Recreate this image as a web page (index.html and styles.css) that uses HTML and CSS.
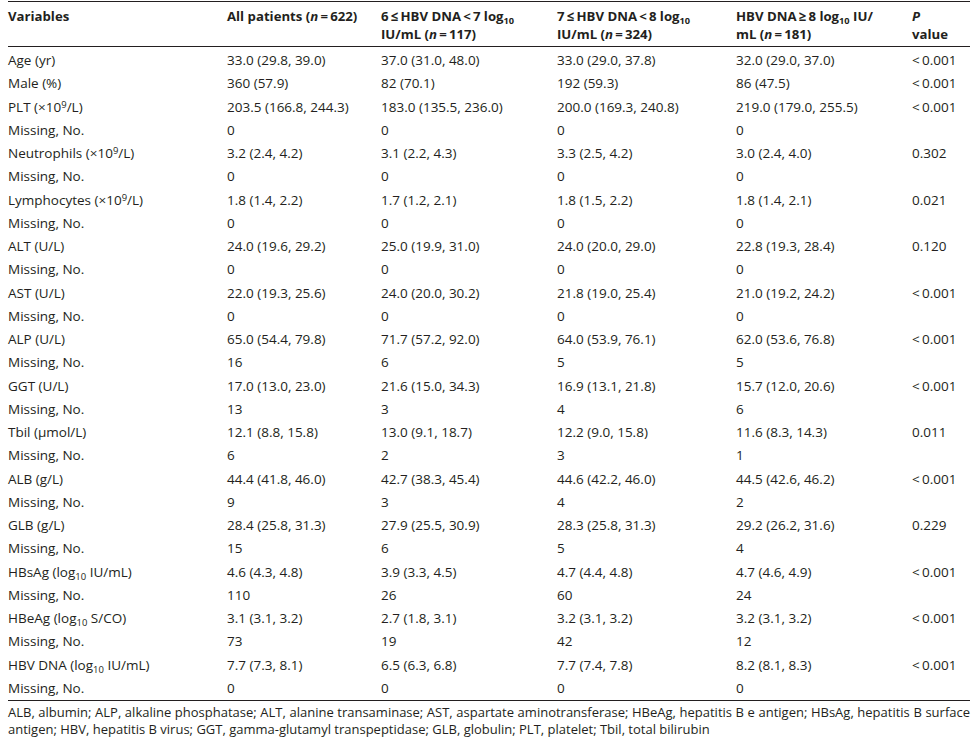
FILE: index.html
```html
<!DOCTYPE html>
<html lang="en">
<head>
<meta charset="utf-8">
<title>Baseline characteristics</title>
<link rel="stylesheet" href="styles.css">
</head>
<body>
<div class="page">
  <table class="data">
    <colgroup>
      <col class="c1"><col class="c2"><col class="c3"><col class="c4"><col class="c5"><col class="c6">
    </colgroup>
    <thead>
      <tr>
        <th>Variables</th>
        <th>All patients (<i>n</i>&thinsp;=&thinsp;622)</th>
        <th>6&thinsp;≤&thinsp;HBV DNA&thinsp;&lt;&thinsp;7 log<sub>10</sub><br>IU/mL (<i>n</i>&thinsp;=&thinsp;117)</th>
        <th>7&thinsp;≤&thinsp;HBV DNA&thinsp;&lt;&thinsp;8 log<sub>10</sub><br>IU/mL (<i>n</i>&thinsp;=&thinsp;324)</th>
        <th>HBV DNA&thinsp;≥&thinsp;8 log<sub>10</sub> IU/<br>mL (<i>n</i>&thinsp;=&thinsp;181)</th>
        <th><i>P</i><br>value</th>
      </tr>
    </thead>
    <tbody>
      <tr><td>Age (yr)</td><td>33.0 (29.8, 39.0)</td><td>37.0 (31.0, 48.0)</td><td>33.0 (29.0, 37.8)</td><td>32.0 (29.0, 37.0)</td><td>&lt;&thinsp;0.001</td></tr>
      <tr><td>Male (%)</td><td>360 (57.9)</td><td>82 (70.1)</td><td>192 (59.3)</td><td>86 (47.5)</td><td>&lt;&thinsp;0.001</td></tr>
      <tr><td>PLT (×10<sup>9</sup>/L)</td><td>203.5 (166.8, 244.3)</td><td>183.0 (135.5, 236.0)</td><td>200.0 (169.3, 240.8)</td><td>219.0 (179.0, 255.5)</td><td>&lt;&thinsp;0.001</td></tr>
      <tr><td>Missing, No.</td><td>0</td><td>0</td><td>0</td><td>0</td><td></td></tr>
      <tr><td>Neutrophils (×10<sup>9</sup>/L)</td><td>3.2 (2.4, 4.2)</td><td>3.1 (2.2, 4.3)</td><td>3.3 (2.5, 4.2)</td><td>3.0 (2.4, 4.0)</td><td>0.302</td></tr>
      <tr><td>Missing, No.</td><td>0</td><td>0</td><td>0</td><td>0</td><td></td></tr>
      <tr><td>Lymphocytes (×10<sup>9</sup>/L)</td><td>1.8 (1.4, 2.2)</td><td>1.7 (1.2, 2.1)</td><td>1.8 (1.5, 2.2)</td><td>1.8 (1.4, 2.1)</td><td>0.021</td></tr>
      <tr><td>Missing, No.</td><td>0</td><td>0</td><td>0</td><td>0</td><td></td></tr>
      <tr><td>ALT (U/L)</td><td>24.0 (19.6, 29.2)</td><td>25.0 (19.9, 31.0)</td><td>24.0 (20.0, 29.0)</td><td>22.8 (19.3, 28.4)</td><td>0.120</td></tr>
      <tr><td>Missing, No.</td><td>0</td><td>0</td><td>0</td><td>0</td><td></td></tr>
      <tr><td>AST (U/L)</td><td>22.0 (19.3, 25.6)</td><td>24.0 (20.0, 30.2)</td><td>21.8 (19.0, 25.4)</td><td>21.0 (19.2, 24.2)</td><td>&lt;&thinsp;0.001</td></tr>
      <tr><td>Missing, No.</td><td>0</td><td>0</td><td>0</td><td>0</td><td></td></tr>
      <tr><td>ALP (U/L)</td><td>65.0 (54.4, 79.8)</td><td>71.7 (57.2, 92.0)</td><td>64.0 (53.9, 76.1)</td><td>62.0 (53.6, 76.8)</td><td>&lt;&thinsp;0.001</td></tr>
      <tr><td>Missing, No.</td><td>16</td><td>6</td><td>5</td><td>5</td><td></td></tr>
      <tr><td>GGT (U/L)</td><td>17.0 (13.0, 23.0)</td><td>21.6 (15.0, 34.3)</td><td>16.9 (13.1, 21.8)</td><td>15.7 (12.0, 20.6)</td><td>&lt;&thinsp;0.001</td></tr>
      <tr><td>Missing, No.</td><td>13</td><td>3</td><td>4</td><td>6</td><td></td></tr>
      <tr><td>Tbil (μmol/L)</td><td>12.1 (8.8, 15.8)</td><td>13.0 (9.1, 18.7)</td><td>12.2 (9.0, 15.8)</td><td>11.6 (8.3, 14.3)</td><td>0.011</td></tr>
      <tr><td>Missing, No.</td><td>6</td><td>2</td><td>3</td><td>1</td><td></td></tr>
      <tr><td>ALB (g/L)</td><td>44.4 (41.8, 46.0)</td><td>42.7 (38.3, 45.4)</td><td>44.6 (42.2, 46.0)</td><td>44.5 (42.6, 46.2)</td><td>&lt;&thinsp;0.001</td></tr>
      <tr><td>Missing, No.</td><td>9</td><td>3</td><td>4</td><td>2</td><td></td></tr>
      <tr><td>GLB (g/L)</td><td>28.4 (25.8, 31.3)</td><td>27.9 (25.5, 30.9)</td><td>28.3 (25.8, 31.3)</td><td>29.2 (26.2, 31.6)</td><td>0.229</td></tr>
      <tr><td>Missing, No.</td><td>15</td><td>6</td><td>5</td><td>4</td><td></td></tr>
      <tr><td>HBsAg (log<sub>10</sub> IU/mL)</td><td>4.6 (4.3, 4.8)</td><td>3.9 (3.3, 4.5)</td><td>4.7 (4.4, 4.8)</td><td>4.7 (4.6, 4.9)</td><td>&lt;&thinsp;0.001</td></tr>
      <tr><td>Missing, No.</td><td>110</td><td>26</td><td>60</td><td>24</td><td></td></tr>
      <tr><td>HBeAg (log<sub>10</sub> S/CO)</td><td>3.1 (3.1, 3.2)</td><td>2.7 (1.8, 3.1)</td><td>3.2 (3.1, 3.2)</td><td>3.2 (3.1, 3.2)</td><td>&lt;&thinsp;0.001</td></tr>
      <tr><td>Missing, No.</td><td>73</td><td>19</td><td>42</td><td>12</td><td></td></tr>
      <tr><td>HBV DNA (log<sub>10</sub> IU/mL)</td><td>7.7 (7.3, 8.1)</td><td>6.5 (6.3, 6.8)</td><td>7.7 (7.4, 7.8)</td><td>8.2 (8.1, 8.3)</td><td>&lt;&thinsp;0.001</td></tr>
      <tr><td>Missing, No.</td><td>0</td><td>0</td><td>0</td><td>0</td><td></td></tr>
    </tbody>
  </table>
  <p class="note">ALB, albumin; ALP, alkaline phosphatase; ALT, alanine transaminase; AST, aspartate aminotransferase; HBeAg, hepatitis B e antigen; HBsAg, hepatitis B surface antigen; HBV, hepatitis B virus; GGT, gamma-glutamyl transpeptidase; GLB, globulin; PLT, platelet; Tbil, total bilirubin</p>
</div>
</body>
</html>
```

FILE: styles.css
```css
html, body {
  margin: 0;
  padding: 0;
  background: #ffffff;
}

.page {
  padding: 1px 9px 0 8px;
  font-family: "Open Sans", "Noto Sans", sans-serif;
  color: #231f20;
}

.data {
  width: 962px;
  table-layout: fixed;
  border-collapse: collapse;
  border-top: 1px solid #231f20;
  border-bottom: 1px solid #231f20;
  font-size: 13.5px;
}

.c1 { width: 219px; }
.c2 { width: 154px; }
.c3 { width: 176px; }
.c4 { width: 179px; }
.c5 { width: 176px; }
.c6 { width: 58px; }

.data th {
  text-align: left;
  vertical-align: top;
  font-weight: 700;
  font-size: 13.2px;
  line-height: 18px;
  padding: 5px 0 3px;
  border-bottom: 1px solid #231f20;
  white-space: nowrap;
}

.data td {
  padding: 0;
  height: 23.26px;
  line-height: 17px;
  vertical-align: middle;
  white-space: nowrap;
}

.data tbody tr:first-child td {
  padding-top: 2px;
}

.data sub {
  font-size: 0.7em;
  vertical-align: -0.3em;
  line-height: 0;
}

.data sup {
  font-size: 0.7em;
  vertical-align: 0.45em;
  line-height: 0;
}

.note {
  margin: 0;
  padding-top: 3px;
  font-size: 13px;
  line-height: 17px;
  text-align: justify;
  width: 962px;
}
```
